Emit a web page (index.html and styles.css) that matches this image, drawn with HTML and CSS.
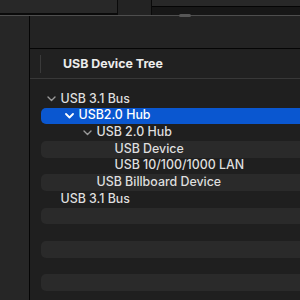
FILE: index.html
```html
<!DOCTYPE html>
<html>
<head>
<meta charset="utf-8">
<link rel="stylesheet" href="styles.css">
</head>
<body>
<div class="top">
  <div class="top-a"></div>
  <div class="top-b"></div>
  <div class="top-c"><span class="pill"></span></div>
</div>
<div class="window">
  <div class="sidebar"></div>
  <div class="main">
    <div class="toolbar"></div>
    <div class="header"><span class="sep"></span><span class="title">USB Device Tree</span></div>
    <div class="list">
      <div class="row lv0"><span class="chev"><svg width="9" height="6" viewBox="0 0 9 6"><path d="M1 1l3.5 3.5L8 1"/></svg></span><span class="label">USB 3.1 Bus</span></div>
      <div class="row lv1 sel"><span class="chev"><svg width="9" height="6" viewBox="0 0 9 6"><path d="M1 1l3.5 3.5L8 1"/></svg></span><span class="label">USB2.0 Hub</span></div>
      <div class="row lv2"><span class="chev"><svg width="9" height="6" viewBox="0 0 9 6"><path d="M1 1l3.5 3.5L8 1"/></svg></span><span class="label">USB 2.0 Hub</span></div>
      <div class="row lv3 alt"><span class="chev"></span><span class="label">USB Device</span></div>
      <div class="row lv3"><span class="chev"></span><span class="label">USB 10/100/1000 LAN</span></div>
      <div class="row lv2 alt"><span class="chev"></span><span class="label">USB Billboard Device</span></div>
      <div class="row lv0"><span class="chev"></span><span class="label">USB 3.1 Bus</span></div>
      <div class="row alt"></div>
      <div class="row"></div>
      <div class="row alt"></div>
      <div class="row"></div>
      <div class="row alt"></div>
    </div>
  </div>
</div>
</body>
</html>
```
FILE: styles.css
```css
html, body {
  margin: 0;
  padding: 0;
  width: 300px;
  height: 300px;
  overflow: hidden;
  background: #1f1f1f;
  font-family: Inter, "Liberation Sans", sans-serif;
}
.top {
  display: flex;
  height: 15px;
  border-bottom: 1px solid #4e4e4e;
}
.top-a {
  width: 117px;
  height: 13px;
  background: #282828;
  border-right: 1px solid #0a0a0a;
  border-bottom: 2px solid #0a0a0a;
}
.top-b {
  width: 33px;
  background: #232323;
  border-right: 1px solid #0a0a0a;
}
.top-c {
  flex: 1;
  position: relative;
  background: #171717;
  border-top: 6px solid #282828;
  box-shadow: inset 0 1px 0 #050505;
}
.pill {
  position: absolute;
  left: 27px;
  bottom: -2px;
  width: 12px;
  height: 3px;
  border-radius: 2px;
  background: #565656;
}
.window {
  display: flex;
  height: 284px;
}
.sidebar {
  width: 29px;
  background: #262626;
  border-right: 1px solid #050505;
}
.main {
  flex: 1;
  display: flex;
  flex-direction: column;
  background: #1f1f1f;
}
.toolbar {
  height: 32px;
  background: #232323;
  border-bottom: 1px solid #050505;
}
.header {
  height: 29px;
  display: flex;
  align-items: center;
  padding-left: 10px;
  background: #212121;
  border-bottom: 1px solid #383838;
}
.sep {
  width: 1px;
  height: 18px;
  background: #3a3a3a;
}
.title {
  margin-left: 22px;
  color: #ececec;
  font-weight: 700;
  font-size: 12.4px;
}
.list {
  padding-top: 12px;
  padding-left: 11px;
}
.row {
  height: 16.67px;
  display: flex;
  align-items: center;
  border-radius: 5px 0 0 5px;
  color: #dedede;
  font-size: 12.4px;
  font-weight: 500;
  box-sizing: border-box;
}
.row.alt {
  background: #2a2a2a;
}
.row.sel {
  background: #0a57d0;
  color: #ffffff;
}
.lv0 { padding-left: 5px; }
.lv1 { padding-left: 23px; }
.lv2 { padding-left: 41px; }
.lv3 { padding-left: 59px; }
.chev {
  width: 14.5px;
  display: flex;
  align-items: center;
  padding-left: 1px;
  box-sizing: border-box;
}
.chev svg path {
  fill: none;
  stroke: #9a9a9a;
  stroke-width: 1.4;
  stroke-linecap: round;
  stroke-linejoin: round;
}
.sel .chev svg path {
  stroke: #ffffff;
  stroke-width: 1.8;
}
.label {
  line-height: 16px;
  margin-top: -1px;
}
```
